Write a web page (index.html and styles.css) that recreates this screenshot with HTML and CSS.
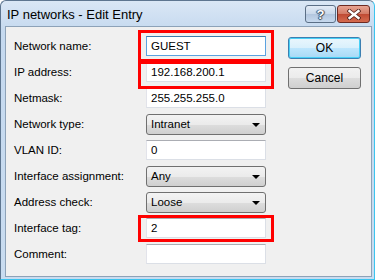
FILE: index.html
```html
<!DOCTYPE html>
<html>
<head>
<meta charset="utf-8">
<link rel="stylesheet" href="styles.css">
</head>
<body>
<div class="window">
  <div class="titlebar">
    <span class="title">IP networks - Edit Entry</span>
    <div class="caption-btns">
      <div class="cap help">?</div>
      <div class="cap close">
        <svg width="14" height="11" viewBox="0 0 14 11"><path d="M2.5 2 L11.5 9 M11.5 2 L2.5 9" stroke="#4a1a14" stroke-width="4" stroke-linecap="square"/><path d="M2.5 2 L11.5 9 M11.5 2 L2.5 9" stroke="#fff" stroke-width="2.4" stroke-linecap="square"/></svg>
      </div>
    </div>
  </div>
  <div class="client">
    <div class="form">
      <div class="row"><span class="label">Network name:</span><div class="field input focus">GUEST</div></div>
      <div class="row"><span class="label">IP address:</span><div class="field input">192.168.200.1</div></div>
      <div class="row"><span class="label">Netmask:</span><div class="field input">255.255.255.0</div></div>
      <div class="row"><span class="label">Network type:</span><div class="field select">Intranet<span class="arrow"></span></div></div>
      <div class="row"><span class="label">VLAN ID:</span><div class="field input">0</div></div>
      <div class="row"><span class="label">Interface assignment:</span><div class="field select">Any<span class="arrow"></span></div></div>
      <div class="row"><span class="label">Address check:</span><div class="field select">Loose<span class="arrow"></span></div></div>
      <div class="row"><span class="label">Interface tag:</span><div class="field input">2</div></div>
      <div class="row"><span class="label">Comment:</span><div class="field input"></div></div>
    </div>
    <div class="buttons">
      <div class="btn default">OK</div>
      <div class="btn">Cancel</div>
    </div>
    <div class="mark m1"></div>
    <div class="mark m2"></div>
    <div class="mark m3"></div>
  </div>
</div>
</body>
</html>
```
FILE: styles.css
```css
html, body { margin: 0; padding: 0; }
body { width: 375px; height: 280px; overflow: hidden; background: #fff; }
.window {
  box-sizing: border-box;
  width: 375px; height: 280px;
  background: linear-gradient(#dae7f5, #c5d9ef 30px, #c9dcf0);
  border: 1px solid #5e7690;
  border-right-color: #3cc4ee;
  border-bottom-color: #3cc4ee;
  border-radius: 6px 6px 0 0;
  display: flex; flex-direction: column;
  font-family: "Liberation Sans", Arial, sans-serif;
}
.titlebar {
  height: 25px;
  display: flex; align-items: center;
  padding-left: 6px;
}
.title { font-size: 13px; color: #000; flex: 1; padding-top: 1px; }
.caption-btns { display: flex; align-self: flex-start; margin-top: 4px; margin-right: 4px; gap: 1px; }
.cap {
  box-sizing: border-box;
  width: 31px; height: 18px;
  border: 1px solid #5b6f86;
  border-radius: 3px;
  display: flex; align-items: center; justify-content: center;
}
.help {
  background: linear-gradient(#e3ecf6, #c8d8ea 50%, #b2c6de 51%, #c7d9ee);
  color: #fff; font-weight: bold; font-size: 13px;
  text-shadow: 0 0 1px #34465c, 1px 0 1px #34465c, -1px 0 1px #34465c, 0 1px 1px #34465c;
}
.close {
  width: 33px;
  border-color: #6d2a22;
  background: linear-gradient(#e8a493, #d27a65 50%, #bf4a33 51%, #d56b4f);
}
.client {
  position: relative;
  flex: 1;
  margin: 0 2px 2px 4px;
  border: 1px solid #8da2b8;
  background: #f0f0f0;
  display: flex;
  padding: 6px 0 0 8px;
}
.form { width: 252px; display: flex; flex-direction: column; }
.row { height: 26px; display: flex; align-items: center; }
.label { width: 132px; font-size: 11.5px; color: #000; }
.field {
  box-sizing: border-box;
  width: 120px; height: 20px;
  font-size: 11.5px; color: #000;
  display: flex; align-items: center;
  padding-left: 4px;
  position: relative;
}
.input {
  background: #fff;
  border: 1px solid #dbdfe6;
  border-top-color: #abadb3;
  border-left-color: #e2e3ea;
}
.input.focus { border-color: #5ba2e0; border-top-color: #3d7bad; }
.select {
  height: 21px;
  border: 1px solid #707070;
  border-radius: 3px;
  background: linear-gradient(#f3f3f3, #ebebeb 50%, #dddddd 51%, #cfcfcf);
}
.arrow {
  position: absolute; right: 5px; top: 8px;
  width: 0; height: 0;
  border-left: 4px solid transparent;
  border-right: 4px solid transparent;
  border-top: 4px solid #000;
}
.buttons { margin-left: 22px; padding-top: 4px; display: flex; flex-direction: column; gap: 8px; }
.btn {
  box-sizing: border-box;
  width: 73px; height: 22px;
  border: 1px solid #707070;
  border-radius: 3px;
  background: linear-gradient(#f2f2f2, #ebebeb 50%, #dddddd 51%, #cfcfcf);
  font-size: 12px; color: #000;
  display: flex; align-items: center; justify-content: center;
}
.btn.default {
  border-color: #3c7fb1;
  background: linear-gradient(#eaf6fd, #d9f0fc 50%, #bee6fd 51%, #a7d9f5);
  box-shadow: inset 0 0 0 1px #48d0f6;
}
.mark { position: absolute; border: 3px solid #ff0000; box-sizing: border-box; width: 136px; left: 132px; }
.m1 { top: 3px; height: 32px; }
.m2 { top: 34px; height: 28px; }
.m3 { top: 188px; height: 27px; }
```
